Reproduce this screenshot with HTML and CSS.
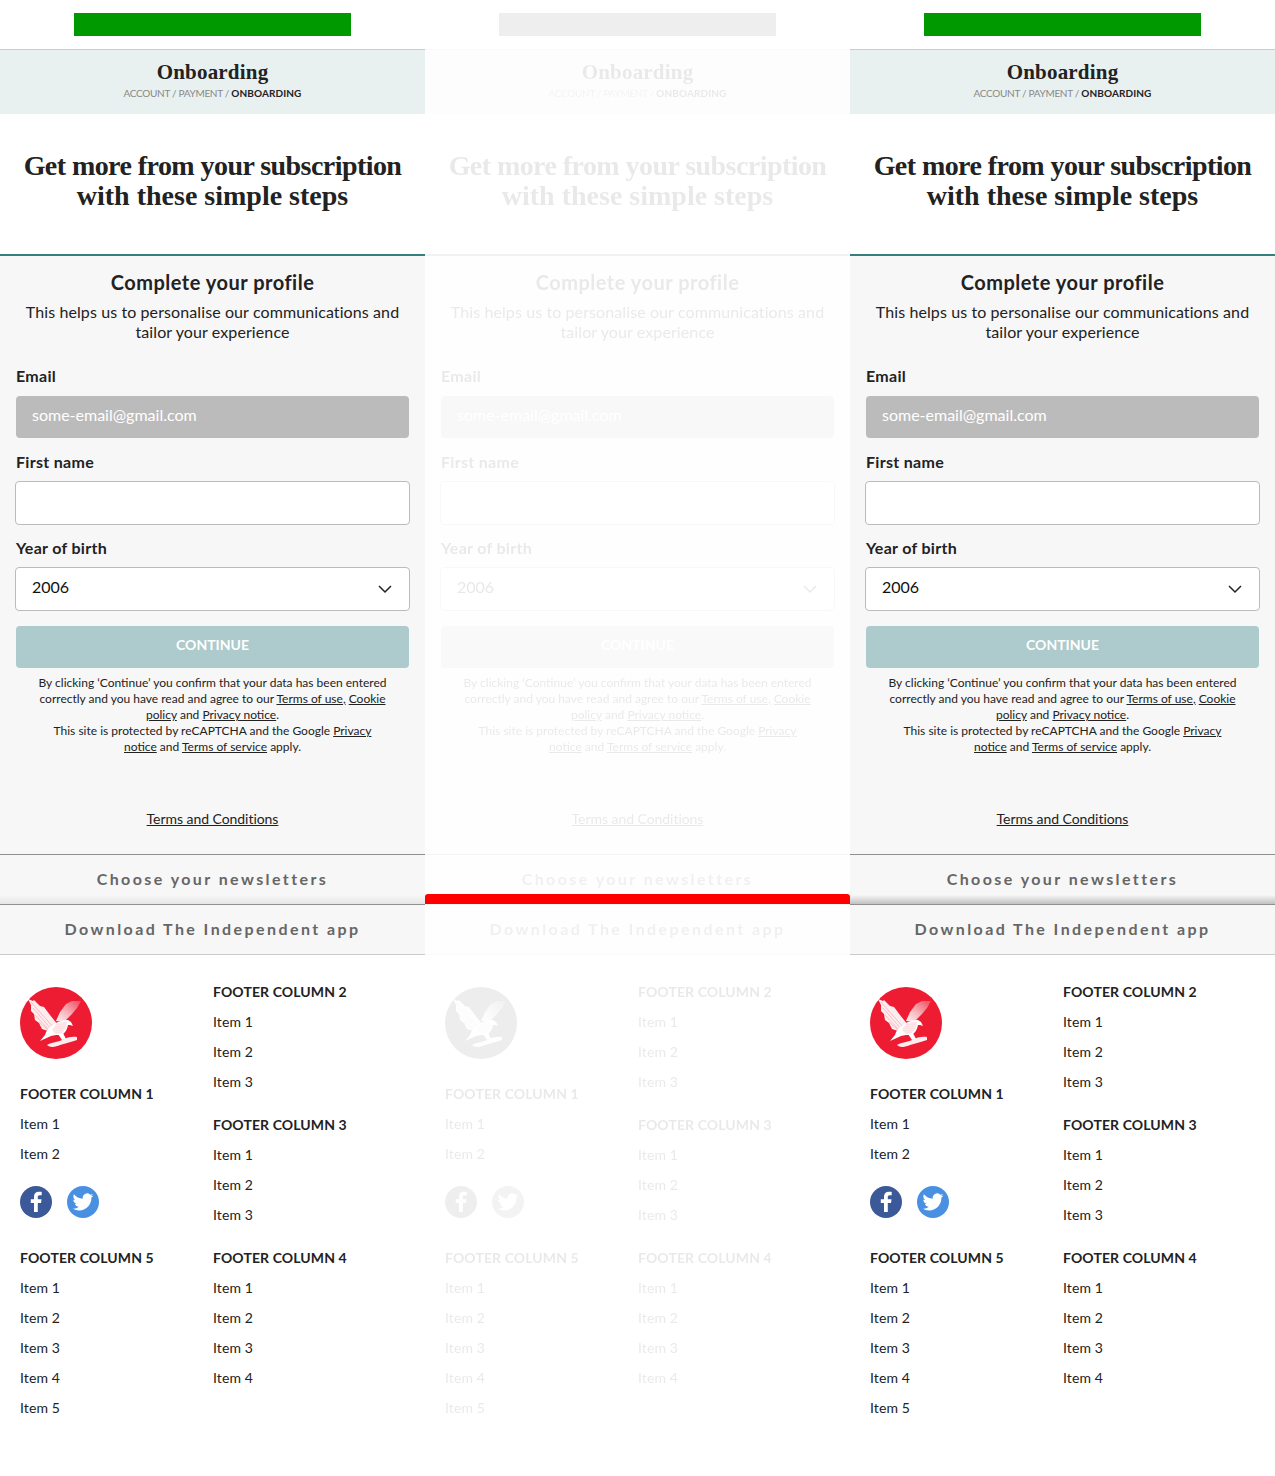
FILE: index.html
```html
<!DOCTYPE html>
<html lang="en">
<head>
    <meta charset="utf-8">
    <title>Onboarding</title>
    <link rel="stylesheet" href="styles.css">
</head>
<body>
<svg class="svg-defs" width="0" height="0" aria-hidden="true">
    <defs>
        <linearGradient id="wing-fade" x1="1" y1="0" x2="0" y2="1">
            <stop offset="0" stop-color="#fff" stop-opacity=".2"/>
            <stop offset=".6" stop-color="#fff" stop-opacity=".7"/>
            <stop offset="1" stop-color="#fff" stop-opacity=".95"/>
        </linearGradient>
        <pattern id="halftone" width="2" height="2" patternUnits="userSpaceOnUse">
            <circle cx="1" cy="1" r=".45" fill="#ed1c33"/>
        </pattern>
        <symbol id="eagle" viewBox="0 0 72 72">
            <circle cx="36" cy="36" r="36" fill="#ed1c33"/>
            <path fill="#fff" fill-opacity=".92" d="M8 12l5 2 1-1 6 6 4 1 6 8 4 5 4 5-4 8-6-2-6-2-3-6-4-3-1-6-3-3 0-6z"/>
            <path fill="none" stroke="#ed1c33" stroke-width=".4" stroke-opacity=".6" d="M11 15l23 26M13 21l19 22M15 28l15 16M19 35l9 8"/>
            <path fill="url(#wing-fade)" d="M61 14l-9 0-6 3-6 8-4 9 8 1 8-8 5-6z"/>
            <path fill="#fff" d="M33 38c5-4 11-5 15-5l3 2 2 4-3-1-2 0c-1 5-3 9-8 10l-4 0-5 1-11 5 5-6c1-4 4-8 8-10z"/>
            <path fill="url(#halftone)" d="M36 37c4-2 8-2 11-2l-1 6-5 6-5 0-4-4z"/>
            <path fill="#fff" d="M38 47l4 6 4-1-3-6z"/>
            <path fill="#fff" fill-opacity=".92" d="M27 58c5-3 11-3 15-5 5-3 11-4 15-3l0 3c-5 2-11 3-17 5-4 2-10 3-13 0z"/>
        </symbol>
        <symbol id="facebook" viewBox="0 0 32 32">
            <circle cx="16" cy="16" r="16" fill="#3b5998"/>
            <path fill="#fff" d="M17.8 26v-9h3.2l.5-3.7h-3.7V11c0-1.1.4-1.8 1.9-1.8h2V5.9c-.4 0-1.5-.1-2.9-.1-2.9 0-4.8 1.7-4.8 4.9v2.6h-3.2V17H14v9z"/>
        </symbol>
        <symbol id="twitter" viewBox="0 0 32 32">
            <circle cx="16" cy="16" r="16" fill="#4a90e2"/>
            <path fill="#fff" transform="translate(5.5 5.5) scale(.875)" d="M23.95 4.57a10 10 0 0 1-2.82.77 4.96 4.96 0 0 0 2.16-2.72c-.95.55-2 .96-3.12 1.18a4.92 4.92 0 0 0-8.38 4.48C7.69 8.1 4.07 6.13 1.64 3.16a4.82 4.82 0 0 0-.67 2.48c0 1.71.87 3.21 2.19 4.1a4.9 4.9 0 0 1-2.23-.61v.06a4.92 4.92 0 0 0 3.95 4.83 5 5 0 0 1-2.21.08 4.94 4.94 0 0 0 4.6 3.42A9.87 9.87 0 0 1 0 19.54a14 14 0 0 0 7.56 2.21c9.05 0 14-7.5 14-13.98 0-.21 0-.42-.02-.63a9.94 9.94 0 0 0 2.41-2.57z"/>
        </symbol>
    </defs>
</svg>

<div class="screens">

    <!-- first screen -->
    <div class="screen">
        <div class="topbar"><div class="topbar-logo"></div></div>
        <div class="steps">
            <h2 class="steps-title">Onboarding</h2>
            <div class="crumbs">ACCOUNT / PAYMENT / <b>ONBOARDING</b></div>
        </div>
        <div class="hero"><h1><span class="hero-tight">Get more from your subscription</span><br>with these simple steps</h1></div>
        <div class="panel">
            <h3 class="panel-title">Complete your profile</h3>
            <p class="panel-text">This helps us to personalise our communications and tailor your experience</p>
            <label class="field-label field-label-first">Email</label>
            <input class="field field-disabled" type="text" value="some-email@gmail.com" readonly>
            <label class="field-label">First name</label>
            <input class="field" type="text">
            <label class="field-label field-label-year">Year of birth</label>
            <div class="select-wrap">
                <select class="field field-select"><option>2006</option></select>
                <svg class="chevron" viewBox="0 0 14 9"><path d="M1 1l6 6 6-6" fill="none" stroke="#222" stroke-width="1.5"/></svg>
            </div>
            <button class="continue" type="button">CONTINUE</button>
            <p class="legal">By clicking ‘Continue’ you confirm that your data has been entered correctly and you have read and agree to our <a href="#">Terms of use,</a> <a href="#">Cookie policy</a> and <a href="#">Privacy notice</a>.<br>This site is protected by reCAPTCHA and the Google <a href="#">Privacy notice</a> and <a href="#">Terms of service</a> apply.</p>
            <a class="terms" href="#">Terms and Conditions</a>
        </div>
        <div class="fold fold-shadow">Choose your newsletters</div>
        <div class="fold fold-last">Download The Independent app</div>
        <div class="footer">
            <div class="footer-col">
                <svg class="footer-logo"><use href="#eagle"/></svg>
                <div class="footer-head">FOOTER COLUMN 1</div>
                <div class="footer-item">Item 1</div>
                <div class="footer-item">Item 2</div>
                <div class="social">
                    <svg class="social-icon"><use href="#facebook"/></svg>
                    <svg class="social-icon"><use href="#twitter"/></svg>
                </div>
                <div class="footer-group">
                    <div class="footer-head">FOOTER COLUMN 5</div>
                    <div class="footer-item">Item 1</div>
                    <div class="footer-item">Item 2</div>
                    <div class="footer-item">Item 3</div>
                    <div class="footer-item">Item 4</div>
                    <div class="footer-item">Item 5</div>
                </div>
            </div>
            <div class="footer-col footer-col-right">
                <div class="footer-head">FOOTER COLUMN 2</div>
                <div class="footer-item">Item 1</div>
                <div class="footer-item">Item 2</div>
                <div class="footer-item">Item 3</div>
                <div class="footer-group-tight">
                    <div class="footer-head">FOOTER COLUMN 3</div>
                    <div class="footer-item">Item 1</div>
                    <div class="footer-item">Item 2</div>
                    <div class="footer-item">Item 3</div>
                </div>
                <div class="footer-group-tight">
                    <div class="footer-head">FOOTER COLUMN 4</div>
                    <div class="footer-item">Item 1</div>
                    <div class="footer-item">Item 2</div>
                    <div class="footer-item">Item 3</div>
                    <div class="footer-item">Item 4</div>
                </div>
            </div>
        </div>
    </div>

    <!-- second screen, mid transition -->
    <div class="screen-holder">
        <div class="screen screen-faded">
            <div class="topbar"><div class="topbar-logo"></div></div>
            <div class="steps">
                <h2 class="steps-title">Onboarding</h2>
                <div class="crumbs">ACCOUNT / PAYMENT / <b>ONBOARDING</b></div>
            </div>
            <div class="hero"><h1><span class="hero-tight">Get more from your subscription</span><br>with these simple steps</h1></div>
            <div class="panel">
                <h3 class="panel-title">Complete your profile</h3>
                <p class="panel-text">This helps us to personalise our communications and tailor your experience</p>
                <label class="field-label field-label-first">Email</label>
                <input class="field field-disabled" type="text" value="some-email@gmail.com" readonly>
                <label class="field-label">First name</label>
                <input class="field" type="text">
                <label class="field-label field-label-year">Year of birth</label>
                <div class="select-wrap">
                    <select class="field field-select"><option>2006</option></select>
                    <svg class="chevron" viewBox="0 0 14 9"><path d="M1 1l6 6 6-6" fill="none" stroke="#222" stroke-width="1.5"/></svg>
                </div>
                <button class="continue" type="button">CONTINUE</button>
                <p class="legal">By clicking ‘Continue’ you confirm that your data has been entered correctly and you have read and agree to our <a href="#">Terms of use,</a> <a href="#">Cookie policy</a> and <a href="#">Privacy notice</a>.<br>This site is protected by reCAPTCHA and the Google <a href="#">Privacy notice</a> and <a href="#">Terms of service</a> apply.</p>
                <a class="terms" href="#">Terms and Conditions</a>
            </div>
            <div class="fold">Choose your newsletters</div>
            <div class="fold fold-last">Download The Independent app</div>
            <div class="footer">
                <div class="footer-col">
                    <svg class="footer-logo"><use href="#eagle"/></svg>
                    <div class="footer-head">FOOTER COLUMN 1</div>
                    <div class="footer-item">Item 1</div>
                    <div class="footer-item">Item 2</div>
                    <div class="social">
                        <svg class="social-icon"><use href="#facebook"/></svg>
                        <svg class="social-icon"><use href="#twitter"/></svg>
                    </div>
                    <div class="footer-group">
                        <div class="footer-head">FOOTER COLUMN 5</div>
                        <div class="footer-item">Item 1</div>
                        <div class="footer-item">Item 2</div>
                        <div class="footer-item">Item 3</div>
                        <div class="footer-item">Item 4</div>
                        <div class="footer-item">Item 5</div>
                    </div>
                </div>
                <div class="footer-col footer-col-right">
                    <div class="footer-head">FOOTER COLUMN 2</div>
                    <div class="footer-item">Item 1</div>
                    <div class="footer-item">Item 2</div>
                    <div class="footer-item">Item 3</div>
                    <div class="footer-group-tight">
                        <div class="footer-head">FOOTER COLUMN 3</div>
                        <div class="footer-item">Item 1</div>
                        <div class="footer-item">Item 2</div>
                        <div class="footer-item">Item 3</div>
                    </div>
                    <div class="footer-group-tight">
                        <div class="footer-head">FOOTER COLUMN 4</div>
                        <div class="footer-item">Item 1</div>
                        <div class="footer-item">Item 2</div>
                        <div class="footer-item">Item 3</div>
                        <div class="footer-item">Item 4</div>
                    </div>
                </div>
            </div>
        </div>
        <div class="red-bar"></div>
    </div>

    <!-- third screen -->
    <div class="screen">
        <div class="topbar"><div class="topbar-logo"></div></div>
        <div class="steps">
            <h2 class="steps-title">Onboarding</h2>
            <div class="crumbs">ACCOUNT / PAYMENT / <b>ONBOARDING</b></div>
        </div>
        <div class="hero"><h1><span class="hero-tight">Get more from your subscription</span><br>with these simple steps</h1></div>
        <div class="panel">
            <h3 class="panel-title">Complete your profile</h3>
            <p class="panel-text">This helps us to personalise our communications and tailor your experience</p>
            <label class="field-label field-label-first">Email</label>
            <input class="field field-disabled" type="text" value="some-email@gmail.com" readonly>
            <label class="field-label">First name</label>
            <input class="field" type="text">
            <label class="field-label field-label-year">Year of birth</label>
            <div class="select-wrap">
                <select class="field field-select"><option>2006</option></select>
                <svg class="chevron" viewBox="0 0 14 9"><path d="M1 1l6 6 6-6" fill="none" stroke="#222" stroke-width="1.5"/></svg>
            </div>
            <button class="continue" type="button">CONTINUE</button>
            <p class="legal">By clicking ‘Continue’ you confirm that your data has been entered correctly and you have read and agree to our <a href="#">Terms of use,</a> <a href="#">Cookie policy</a> and <a href="#">Privacy notice</a>.<br>This site is protected by reCAPTCHA and the Google <a href="#">Privacy notice</a> and <a href="#">Terms of service</a> apply.</p>
            <a class="terms" href="#">Terms and Conditions</a>
        </div>
        <div class="fold fold-shadow-strong">Choose your newsletters</div>
        <div class="fold fold-last">Download The Independent app</div>
        <div class="footer">
            <div class="footer-col">
                <svg class="footer-logo"><use href="#eagle"/></svg>
                <div class="footer-head">FOOTER COLUMN 1</div>
                <div class="footer-item">Item 1</div>
                <div class="footer-item">Item 2</div>
                <div class="social">
                    <svg class="social-icon"><use href="#facebook"/></svg>
                    <svg class="social-icon"><use href="#twitter"/></svg>
                </div>
                <div class="footer-group">
                    <div class="footer-head">FOOTER COLUMN 5</div>
                    <div class="footer-item">Item 1</div>
                    <div class="footer-item">Item 2</div>
                    <div class="footer-item">Item 3</div>
                    <div class="footer-item">Item 4</div>
                    <div class="footer-item">Item 5</div>
                </div>
            </div>
            <div class="footer-col footer-col-right">
                <div class="footer-head">FOOTER COLUMN 2</div>
                <div class="footer-item">Item 1</div>
                <div class="footer-item">Item 2</div>
                <div class="footer-item">Item 3</div>
                <div class="footer-group-tight">
                    <div class="footer-head">FOOTER COLUMN 3</div>
                    <div class="footer-item">Item 1</div>
                    <div class="footer-item">Item 2</div>
                    <div class="footer-item">Item 3</div>
                </div>
                <div class="footer-group-tight">
                    <div class="footer-head">FOOTER COLUMN 4</div>
                    <div class="footer-item">Item 1</div>
                    <div class="footer-item">Item 2</div>
                    <div class="footer-item">Item 3</div>
                    <div class="footer-item">Item 4</div>
                </div>
            </div>
        </div>
    </div>

</div>
</body>
</html>
```

FILE: styles.css
```css
* {
    box-sizing: border-box;
}
body {
    margin: 0;
    background: #fff;
    color: #222;
    font-family: Lato, "Liberation Sans", sans-serif;
}
.svg-defs {
    position: absolute;
}
.screens {
    display: grid;
    grid-template-columns: repeat(3, 425px);
}
.screen-holder {
    position: relative;
}
.screen-faded {
    filter: grayscale(1) opacity(.1);
}
.screen-faded .topbar-logo {
    background: #555;
}
.red-bar {
    position: absolute;
    left: 0;
    right: 0;
    top: 894px;
    height: 10px;
    background: #f00;
    border-radius: 3px 3px 0 0;
}

/* top of the screen */
.topbar {
    height: 50px;
    padding-top: 13px;
    border-bottom: 1px solid #ccc;
}
.topbar-logo {
    width: 277px;
    height: 23px;
    margin: 0 auto;
    background: #090;
}
.steps {
    height: 64px;
    padding-top: 10px;
    background: #e9f1f0;
    text-align: center;
}
.steps-title {
    margin: 0;
    font-family: "Liberation Serif", serif;
    font-size: 21px;
    line-height: 25px;
    font-weight: bold;
    letter-spacing: .2px;
}
.crumbs {
    margin-top: 1px;
    font-size: 10px;
    line-height: 14px;
    color: #888;
    letter-spacing: -.3px;
}
.crumbs b {
    color: #222;
    letter-spacing: .1px;
}
.hero {
    height: 142px;
    padding-top: 37px;
    border-bottom: 2px solid #35807f;
    text-align: center;
}
.hero h1 {
    margin: 0;
    font-family: "Liberation Serif", serif;
    font-size: 28px;
    line-height: 30px;
    font-weight: bold;
}
.hero-tight {
    letter-spacing: -.56px;
}

/* form */
.panel {
    display: flex;
    flex-direction: column;
    height: 598px;
    padding: 14px 16px 0;
    background: #f7f7f7;
}
.panel-title {
    margin: 0;
    font-size: 20px;
    line-height: 24px;
    font-weight: bold;
    text-align: center;
    letter-spacing: .5px;
}
.panel-text {
    margin: 8px 0 0;
    font-size: 16px;
    line-height: 20px;
    text-align: center;
    letter-spacing: .1px;
}
.field-label {
    margin: 14px 0 9px;
    font-size: 16px;
    line-height: 20px;
    font-weight: bold;
    letter-spacing: .3px;
}
.field-label-first {
    margin: 24px 0 10px;
}
.field-label-year {
    margin-top: 13px;
}
.field {
    display: block;
    width: 395px;
    height: 44px;
    margin: 0 -1px;
    padding: 0 16px 5px;
    border: 1px solid #bbb;
    border-radius: 4px;
    background: #fff;
    color: #111;
    font-family: inherit;
    font-size: 16px;
}
.field-disabled {
    width: 393px;
    height: 42px;
    margin: 0;
    border: 0;
    background: #bbb;
    color: #fff;
}
.field-select {
    appearance: none;
}
.select-wrap {
    position: relative;
}
.chevron {
    position: absolute;
    top: 18px;
    right: 17px;
    width: 14px;
    height: 9px;
}
.continue {
    height: 42px;
    margin-top: 15px;
    padding: 0 0 5px;
    border: 0;
    border-radius: 4px;
    background: #adcacc;
    color: #fff;
    font-family: inherit;
    font-size: 14px;
    font-weight: bold;
}
.legal {
    margin: 7px 0 0;
    padding: 0 20px;
    font-size: 12px;
    line-height: 16px;
    text-align: center;
}
.legal a,
.terms {
    color: inherit;
}
.terms {
    margin-top: 54px;
    font-size: 14px;
    line-height: 20px;
    text-align: center;
    letter-spacing: -.05px;
}

/* collapsed sections */
.fold {
    height: 50px;
    padding-top: 14px;
    border-top: 1px solid #8f8f8f;
    background: #f7f7f7;
    color: #666;
    font-size: 16px;
    line-height: 20px;
    font-weight: bold;
    text-align: center;
    letter-spacing: 2.42px;
}
.fold-shadow {
    background: linear-gradient(to bottom, #f7f7f7 40px, #e4e4e4 50px);
}
.fold-shadow-strong {
    background: linear-gradient(to bottom, #f7f7f7 40px, #bbb 50px);
}
.fold-last {
    height: 51px;
    border-bottom: 1px solid #ccc;
}

/* footer */
.footer {
    display: grid;
    grid-template-columns: 193px 1fr;
    padding-left: 20px;
}
.footer-col {
    padding-top: 32px;
}
.footer-col-right {
    padding-top: 22px;
}
.footer-logo {
    display: block;
    width: 72px;
    height: 72px;
    margin-bottom: 20px;
}
.footer-head {
    font-size: 14px;
    line-height: 30px;
    font-weight: bold;
    letter-spacing: .1px;
}
.footer-item {
    font-size: 14px;
    line-height: 30px;
    letter-spacing: .1px;
}
.footer-group {
    margin-top: 25px;
}
.footer-group-tight {
    margin-top: 13px;
}
.social {
    display: flex;
    gap: 15px;
    margin-top: 17px;
}
.social-icon {
    width: 32px;
    height: 32px;
}
```
